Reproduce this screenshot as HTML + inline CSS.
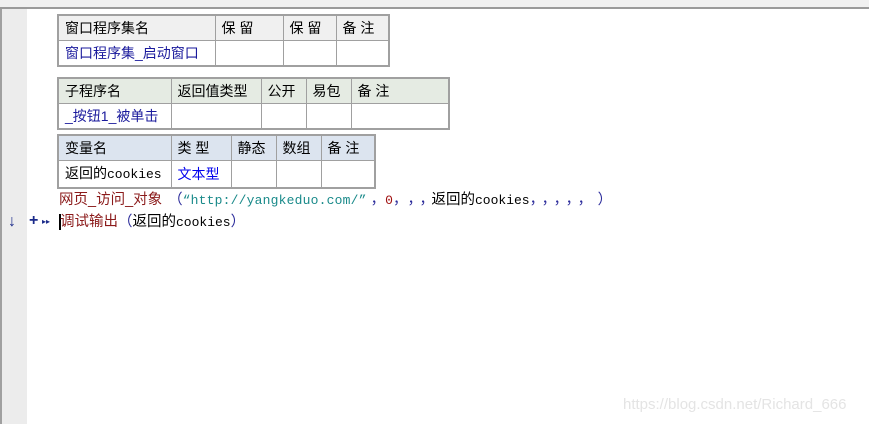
<!DOCTYPE html>
<html><head><meta charset="utf-8"><style>
body{margin:0;width:869px;height:424px;background:#fff;position:relative;overflow:hidden;font-family:"Liberation Sans","Noto Sans CJK SC","WenQuanYi Zen Hei",sans-serif;font-size:13px;color:#000}
.a{position:absolute}
table{position:absolute;border-collapse:collapse;border:2px solid #a0a0a0;table-layout:fixed}
td{border:1px solid #a0a0a0;padding:0 0 0 6px;height:24px;white-space:nowrap;overflow:hidden;font-size:14px;line-height:24px}
.h1 td{background:#f0f0f0}
.h2 td{background:#e5ebe3}
.h3 td{background:#dce4ef}
.blue{color:#1a1a9c}
.bb{color:#0000ee}
.m{font-family:"Liberation Mono","Noto Sans CJK SC",monospace;font-size:13px}
.p{display:inline-block;width:12px;text-align:left}
</style></head><body>
<div class="a" style="left:0;top:0;width:869px;height:7px;background:#f0f0f0"></div>
<div class="a" style="left:0;top:7px;width:869px;height:2px;background:#9a9a9a"></div>
<div class="a" style="left:0;top:9px;width:2px;height:415px;background:#a0a0a0"></div>
<div class="a" style="left:2px;top:9px;width:25px;height:415px;background:#ececec"></div>

<table style="left:57px;top:14px;width:331px">
<colgroup><col style="width:157px"><col style="width:68px"><col style="width:53px"><col style="width:53px"></colgroup>
<tr class="h1"><td>窗口程序集名</td><td>保 留</td><td>保 留</td><td>备 注</td></tr>
<tr><td class="blue">窗口程序集_启动窗口</td><td></td><td></td><td></td></tr>
</table>

<table style="left:57px;top:77px;width:391px">
<colgroup><col style="width:113px"><col style="width:90px"><col style="width:45px"><col style="width:45px"><col style="width:98px"></colgroup>
<tr class="h2"><td>子程序名</td><td>返回值类型</td><td>公开</td><td>易包</td><td>备 注</td></tr>
<tr><td class="blue">_按钮1_被单击</td><td></td><td></td><td></td><td></td></tr>
</table>

<table style="left:57px;top:134px;width:317px">
<colgroup><col style="width:113px"><col style="width:60px"><col style="width:45px"><col style="width:45px"><col style="width:54px"></colgroup>
<tr class="h3"><td>变量名</td><td>类 型</td><td>静态</td><td>数组</td><td>备 注</td></tr>
<tr><td>返回的<span class="m">cookies</span></td><td class="bb">文本型</td><td></td><td></td><td></td></tr>
</table>

<div class="a" style="left:59px;top:191px;line-height:18px;font-size:14.5px;white-space:nowrap"><span style="color:#8b1a1a">网页_访问_对象</span><span style="color:#2a2a9a;margin-left:6px">（</span><span class="m" style="color:#1a8a8a;letter-spacing:0.2px">“http://yangkeduo.com/”</span><span style="color:#2a2a9a;margin-left:4px">，</span><span class="m" style="color:#a01010">0</span><span style="color:#2a2a9a">，<span class="p">，</span><span class="p">，</span></span>返回的<span class="m">cookies</span><span style="color:#2a2a9a"><span class="p">，</span><span class="p">，</span><span class="p">，</span><span class="p">，</span><span class="p">，</span><span style="margin-left:8px">）</span></span></div>

<div class="a" style="left:8px;top:213px;line-height:18px;font-size:16px;font-weight:bold;color:#1a2a8a">↓</div>
<div class="a" style="left:29px;top:212px;line-height:18px;font-size:16px;font-weight:bold;color:#1a2a8a">+</div>
<div class="a" style="left:42px;top:213px;line-height:18px;font-size:8px;color:#1a2a8a">▸▸</div>
<div class="a" style="left:59px;top:214px;width:2px;height:16px;background:#000"></div>
<div class="a" style="left:60px;top:213px;line-height:18px;font-size:14.5px;white-space:nowrap"><span style="color:#8b1a1a">调试输出</span><span style="color:#2a2a9a">（</span>返回的<span class="m">cookies</span><span style="color:#2a2a9a">）</span></div>

<div class="a" style="left:623px;top:396px;font-size:15px;color:#e4e4e4;white-space:nowrap">https://blog.csdn.net/Richard_666</div>
</body></html>
